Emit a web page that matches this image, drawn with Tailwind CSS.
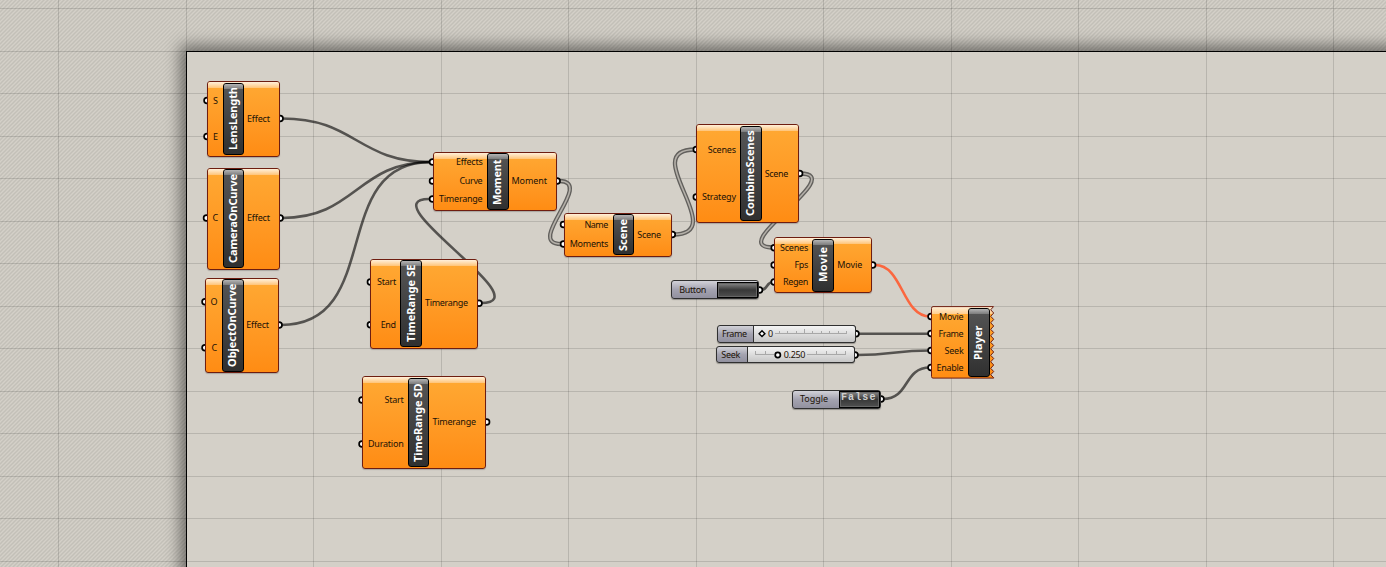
<!DOCTYPE html>
<html lang="en">
<head>
<meta charset="utf-8">
<title>Definition canvas</title>
<script src="https://cdn.jsdelivr.net/npm/@tailwindcss/browser@4"></script>
</head>
<body class="bg-[#d4d0c8]">
<main class="relative w-[1386px] h-[567px] overflow-hidden bg-[#d4d0c8] font-['Noto_Sans','Open_Sans',sans-serif]">
  <svg class="absolute inset-0" width="1386" height="567">
    <defs>
      <pattern id="hatch" width="4" height="4" patternUnits="userSpaceOnUse">
        <path d="M-1 1L1 -1M-1 5L5 -1M3 5L5 3" stroke="#c3c0b8" stroke-width="1.5"/>
      </pattern>
    </defs>
    <rect width="1386" height="567" fill="url(#hatch)"/>
  </svg>
  <div class="absolute left-[186px] top-[51px] w-[1300px] h-[600px] border border-black bg-[#d4d0c8] shadow-[0_0_14px_6px_rgba(0,0,0,0.45)]"></div>
  <svg id="canvas" class="absolute inset-0" width="1386" height="567" fill="none">
    <g id="grid" stroke="#000" stroke-opacity=".13"></g>
    <g stroke="#000" stroke-opacity=".6" stroke-width="2.6">
      <path d="M282 118.5C356 118.5 357 162 431 162"/>
      <path d="M282 218C356 218 357 162 431 162"/>
      <path d="M281 325C385 325 327 162 431 162"/>
      <path d="M481 303C543 303 369 199 429 199"/>
      <path d="M761 290C768 290 766 282 773 282"/>
      <path d="M858 333.7H930"/>
      <path d="M857 355C893 355 894 350.5 930 350.5"/>
      <path d="M883 399C910 399 903 367.5 930 367.5"/>
    </g>
    <path d="M875 265C903 265 902 316.5 930 316.5" stroke="#fb673f" stroke-width="2.6"/>
    <g id="double"></g>
    <g id="ports" fill="#fff" stroke="#000" stroke-width="1.7"></g>
  </svg>
  <div id="nodes"></div>
  <svg class="absolute inset-0" width="1386" height="567" fill="none">
    <g id="ticks" stroke="#a8a8a8" stroke-width="1"></g>
    <path d="M762 330.8L764.9 333.7L762 336.6L759.1 333.7Z" fill="#fff" stroke="#000" stroke-width="1.4"/>
    <circle cx="777.8" cy="355" r="2.6" fill="#fff" stroke="#000" stroke-width="1.7"/>
  </svg>
</main>
<script>
const $ = id => document.getElementById(id);
let g = '';
for (let i = 0; i < 11; i++) { const x = Math.floor(58.5 + i * 127.5) + .5; g += `<path d="M${x} 0V567"/>`; }
for (let i = 0; i < 14; i++) { const y = Math.floor(8.6 + i * 42.5) + .5; g += `<path d="M0 ${y}H1386"/>`; }
$('grid').innerHTML = g;

$('double').innerHTML = [
  'M559 181C596 181 524 244 561 244',
  'M673 234.5C732 234.5 636 149.5 695 149.5',
  'M800 173.5C850 173.5 723 247.5 773 247.5'
].map(d => `<path d="${d}" stroke="#62605d" stroke-width="4.3"/><path d="${d}" stroke="#b4b0a9" stroke-width="1.6"/>`).join('');

// [left, top, right, bottom, titleLeft, titleRight, title, titleTop, titleBottom, inputs [text, y, left, right], output [text, y, left, right]]
const nodes = [
  [207,81,280,157,222.7,244,'LensLength',87,150,[['S',100.5,213,217],['E',136.5,213,217]],['Effect',118.5,247,270]],
  [206.5,167.5,280,270.1,222.7,244,'CameraOnCurve',174,263,[['C',218,212.5,218.3]],['Effect',218,247,270]],
  [205,277.5,279,373.9,222,243.5,'ObjectOnCurve',283.3,366.7,[['O',301.7,210.5,217],['C',347.7,211.5,217]],['Effect',325,246.3,269]],
  [432.5,151.7,557,211.5,487,508.5,'Moment',159,204.5,[['Effects',162,456,482.7],['Curve',181,459.5,482.7],['Timerange',199,439,482.7]],['Moment',181,511.5,547]],
  [370.4,258.7,478.9,349.2,400,422,'TimeRange SE',264.5,342,[['Start',282,377,396.3],['End',324.7,380.7,396]],['Timerange',303.3,425,468]],
  [362,376,486.5,469,408,429.3,'TimeRange SD',383,461.5,[['Start',400,384.5,403.7],['Duration',444,368,403.7]],['Timerange',422,432.5,476]],
  [563.5,212.5,672.2,257.2,613,634.3,'Scene',218.7,250.7,[['Name',224.5,584.5,608.3],['Moments',244,569.7,608.3]],['Scene',234.5,637.3,661]],
  [696.3,124,799.5,223.2,740,761.7,'CombineScenes',130.5,216.3,[['Scenes',149.5,707.7,736],['Strategy',197,702,736]],['Scene',173.5,764.7,788.3]],
  [774.2,237.3,872.5,293.2,812.3,833.7,'Movie',247,282,[['Scenes',247.8,780,808.3],['Fps',265,794.5,808.3],['Regen',282,783,808.3]],['Movie',265,837.3,862.3]],
  [931,306,990.5,378.5,968,989.5,'Player',325.5,360,[['Movie',316.5,939,963.7],['Frame',333.5,938.5,963.7],['Seek',350.5,944.5,963.7],['Enable',367.5,936.5,963.7]],null]
];
let ports = '', html = '';
const pen = document.createElement('canvas').getContext('2d');
// Letter spacing that spreads a text over the given width.
const spread = (t, w, font) => {
  if (t.length < 2) return 0;
  pen.font = font;
  return ((w - pen.measureText(t).width) / (t.length - 1)).toFixed(3);
};
const port = (x, y) => { ports += `<circle cx="${x}" cy="${y}" r="2.9"/>`; };
const label = (t, y, l, r) => `<span class="absolute text-[9px] leading-[14px] whitespace-pre text-[#1c1206]" style="left:${l}px;top:${y - 7}px;letter-spacing:${spread(t, r - l, '9px "Noto Sans"')}px">${t}</span>`;
for (const [l, t, r0, b0, tl, tr, name, ty, tb, ins, out] of nodes) {
  const r = r0 - .5, b = b0 - .5;
  for (const i of ins) port(l, i[1]);
  if (out) port(r + .6, out[1]);
  if (name === 'Player') {
    let d = 'M933 306.6H993.5';
    for (let i = 0; i < 11; i++) d += `L990.7 ${309.8 + i * 6.5}L993.7 ${313 + i * 6.5 - (i === 10 ? .3 : 0)}`;
    html += `<svg class="absolute inset-0" width="1386" height="567"><defs><linearGradient id="orange" x2="0" y2="1"><stop stop-color="#fff0d8"/><stop offset=".1" stop-color="#ffcf91"/><stop offset=".11" stop-color="#ffa730"/><stop offset="1" stop-color="#ff8d14"/></linearGradient></defs><path d="${d}V378.1H933Q931.5 378.1 931.5 376.5V308.5Q931.5 306.6 933 306.6Z" fill="url(#orange)" stroke="#6e1d10"/></svg>`;
  } else {
    html += `<div class="absolute rounded-[3px] border border-[#6e1d10] bg-linear-to-b from-[#ffa933] to-[#ff8c13] overflow-hidden shadow-[0_1px_1px_rgba(0,0,0,0.2)]" style="left:${l}px;top:${t}px;width:${r - l}px;height:${b - t}px"><div class="h-[6px] bg-linear-to-b from-[#fff0da] to-[#ffc477]"></div></div>`;
  }
  html += `<div class="absolute rounded-[3px] border border-black bg-linear-to-b from-[#565656] to-[#303030] overflow-hidden" style="left:${tl}px;top:${t + 1.7}px;width:${tr - tl}px;height:${b0 - t - 3.4}px"><div class="h-[5px] bg-linear-to-b from-[#b5b5b5] to-[#7c7c7c]"></div></div>`;
  html += `<span class="absolute origin-top-left -rotate-90 text-[11px] leading-[16px] font-bold whitespace-pre text-white" style="left:${(tl + tr) / 2 - 8.5}px;top:${tb}px;letter-spacing:${spread(name, tb - ty, 'bold 11px "Noto Sans"')}px">${name}</span>`;
  for (const i of ins) html += label(...i);
  if (out) html += label(...out);
}
const box = (l, t, r, b, cls) => `<div class="absolute ${cls}" style="left:${l}px;top:${t}px;width:${r - l}px;height:${b - t}px"></div>`;
const grey = 'rounded-[3px] border border-[#303030] bg-linear-to-b from-[#d2d2d8] via-[#a4a3b0] to-[#92919f] shadow-[0_1px_1px_rgba(0,0,0,0.3)]';
const track = 'rounded-r-[3px] border border-[#303030] bg-linear-to-b from-[#f4f4f4] to-[#c6c6c6]';
const dark = 'border border-black bg-linear-to-b from-[#8a8a8a] from-0% via-[#383838] via-50% to-[#505050] outline outline-offset-[-2px] outline-[#666]';
port(759.5, 290); port(856, 333.7); port(855, 355); port(881, 399);
html += box(670.5, 280.3, 759.3, 299.3, grey) + box(717, 282, 758, 298, dark) + label('Button', 290, 679.3, 706.3);
html += box(716.5, 325, 856, 342.7, grey) + box(753, 325, 856, 342.7, track) + label('Frame', 334, 722, 747) + label('0', 334, 768, 772.7);
html += box(715.5, 346.3, 854.5, 363.5, grey) + box(746.5, 346.3, 854.5, 363.5, track) + label('Seek', 355, 721.3, 740.3) + label('0.250', 355, 783.7, 805.5);
html += box(791.5, 389.5, 881, 408.6, grey) + box(839, 390.5, 879.7, 407.5, dark) + label('Toggle', 399, 800, 828);
html += `<span class="absolute left-[841px] top-[391px] text-[10px] leading-[14px] font-bold whitespace-pre text-[#cfcfcf] font-['Liberation_Mono',monospace]" style="letter-spacing:${spread('False', 34.5, 'bold 10px "Liberation Mono"')}px">False</span>`;
$('nodes').innerHTML = html;
$('ports').innerHTML = ports;

let tk = 'M775 333.5H847';
for (let i = 0; i < 9; i++) tk += `M${[779.5, 787.5, 796.5, 804.5, 812.5, 821.5, 829.5, 838.5, 846.5][i]} 333.5v${i === 3 ? -4.5 : -2.5}`;
tk += 'M755 354.5H774M807 354.5H846';
for (const x of [755.5, 765.5, 816.5, 826.5, 836.5, 845.5]) tk += `M${x} 354.5v-3.5`;
$('ticks').innerHTML = `<path d="${tk}"/>`;
</script>
</body>
</html>
